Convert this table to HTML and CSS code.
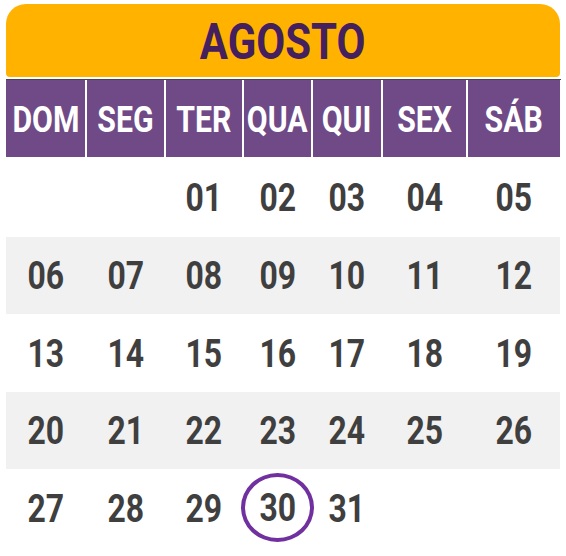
FILE: index.html
```html
<!DOCTYPE html>
<html lang="pt">
<head>
<meta charset="utf-8">
<title>Agosto</title>
<link rel="stylesheet" href="styles.css">
</head>
<body>
<div class="calendar">
  <div class="month"><span class="t">AGOSTO</span></div>
  <div class="rule"></div>
  <div class="row weekdays">
    <div><span class="t">DOM</span></div><div><span class="t">SEG</span></div><div><span class="t">TER</span></div><div><span class="t">QUA</span></div><div><span class="t">QUI</span></div><div><span class="t">SEX</span></div><div><span class="t">SÁB</span></div>
  </div>
  <div class="row week first">
    <div></div><div></div><div><span class="t">01</span></div><div><span class="t">02</span></div><div><span class="t">03</span></div><div><span class="t">04</span></div><div><span class="t">05</span></div>
  </div>
  <div class="row week alt">
    <div><span class="t">06</span></div><div><span class="t">07</span></div><div><span class="t">08</span></div><div><span class="t">09</span></div><div><span class="t">10</span></div><div><span class="t">11</span></div><div><span class="t">12</span></div>
  </div>
  <div class="row week">
    <div><span class="t">13</span></div><div><span class="t">14</span></div><div><span class="t">15</span></div><div><span class="t">16</span></div><div><span class="t">17</span></div><div><span class="t">18</span></div><div><span class="t">19</span></div>
  </div>
  <div class="row week alt">
    <div><span class="t">20</span></div><div><span class="t">21</span></div><div><span class="t">22</span></div><div><span class="t">23</span></div><div><span class="t">24</span></div><div><span class="t">25</span></div><div><span class="t">26</span></div>
  </div>
  <div class="row week">
    <div><span class="t">27</span></div><div><span class="t">28</span></div><div><span class="t">29</span></div><div><span class="today"><span class="t">30</span></span></div><div><span class="t">31</span></div><div></div><div></div>
  </div>
</div>
</body>
</html>
```

FILE: styles.css
```css
html, body {
  margin: 0;
  padding: 0;
  background: #ffffff;
}

body {
  font-family: Roboto, "DejaVu Sans Condensed", sans-serif;
  font-weight: 700;
}

.t {
  display: inline-block;
  transform: scaleX(0.84);
  line-height: 1;
}

.calendar {
  width: 554px;
  margin-left: 6px;
  padding-top: 4px;
}

.month {
  height: 73px;
  background: #ffb300;
  border-radius: 20px 20px 4px 4px;
  color: #45205e;
  font-size: 50px;
  display: flex;
  align-items: center;
  justify-content: center;
  padding-top: 2px;
  box-sizing: border-box;
}

.rule {
  height: 1px;
  margin-top: 2px;
  width: 555px;
  background: #4a4450;
}

.row {
  display: grid;
  grid-template-columns: 79px 77px 76px 67px 68px 83px 92px;
  column-gap: 2px;
}

.row > div {
  display: flex;
  align-items: center;
  justify-content: center;
}

.weekdays {
  height: 77px;
  background: #ffffff;
}

.weekdays > div {
  background: #6f4a87;
  color: #ffffff;
  font-size: 36px;
  padding-top: 2px;
  box-sizing: border-box;
}

.week {
  height: 77.5px;
  color: #3f3f3f;
  font-size: 38px;
}

.week > div {
  padding-top: 2px;
  box-sizing: border-box;
}

.week.first {
  height: 79.5px;
}

.week.alt {
  background: #f1f1f1;
}

.today {
  width: 65px;
  height: 61px;
  border: 4.5px solid #7030a0;
  border-radius: 50%;
  display: flex;
  align-items: center;
  justify-content: center;
  margin-top: -2px;
  flex-shrink: 0;
}
```
